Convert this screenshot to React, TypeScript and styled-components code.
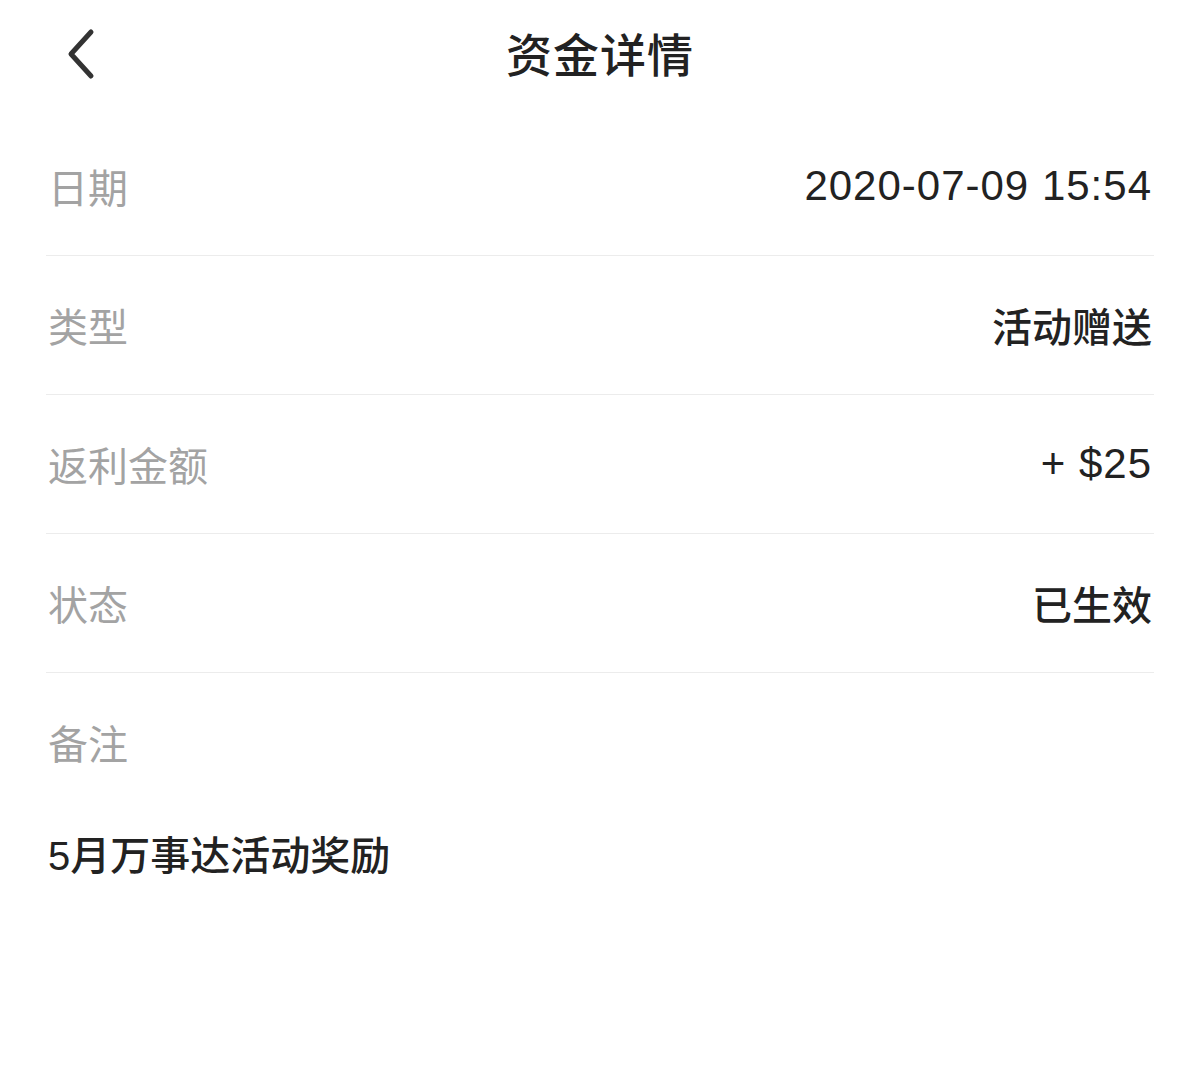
import React from 'react';
import styled, { createGlobalStyle } from 'styled-components';

const GlobalStyle = createGlobalStyle`
  html, body {
    margin: 0;
    padding: 0;
    background: #ffffff;
  }
  body {
    font-family: "Liberation Sans", "Noto Sans CJK SC", sans-serif;
    color: #222222;
  }
`;

const Page = styled.div`
  width: 1200px;
  min-height: 1075px;
  background: #ffffff;
`;

const Header = styled.header`
  position: relative;
  height: 104px;
  display: flex;
  align-items: center;
  justify-content: center;
`;

const BackButton = styled.button`
  position: absolute;
  left: 55px;
  top: 24px;
  width: 48px;
  height: 56px;
  padding: 0;
  border: none;
  background: none;
  display: flex;
  align-items: center;
  justify-content: center;
  cursor: pointer;
`;

const Title = styled.h1`
  margin: 0;
  font-size: 46px;
  font-weight: 500;
  color: #222222;
  letter-spacing: 1px;
`;

const List = styled.div`
  margin: 13px 46px 0;
`;

const Row = styled.div<{ $divider?: boolean }>`
  height: 138px;
  display: flex;
  align-items: center;
  justify-content: space-between;
  padding: 0 2px;
  border-bottom: ${({ $divider }) => ($divider ? '1px solid #ececec' : 'none')};
`;

const Label = styled.span`
  font-size: 40px;
  color: #a3a3a3;
`;

const Value = styled.span<{ $numeric?: boolean }>`
  font-size: ${({ $numeric }) => ($numeric ? '42px' : '40px')};
  font-weight: 500;
  letter-spacing: ${({ $numeric }) => ($numeric ? '1px' : '0')};
  color: #222222;
`;

const Remark = styled.p`
  margin: 13px 0 0;
  padding: 0 2px;
  font-size: 40px;
  font-weight: 500;
  color: #222222;
`;

const rows = [
  { label: '日期', value: '2020-07-09 15:54', numeric: true },
  { label: '类型', value: '活动赠送' },
  { label: '返利金额', value: '+ $25', numeric: true },
  { label: '状态', value: '已生效' },
];

const App: React.FC = () => {
  return (
    <Page>
      <GlobalStyle />
      <Header>
        <BackButton aria-label="返回">
          <svg width="40" height="56" viewBox="0 0 40 56">
            <path
              d="M32 8 L12 30 L32 52"
              fill="none"
              stroke="#333333"
              strokeWidth="5"
              strokeLinecap="round"
              strokeLinejoin="round"
            />
          </svg>
        </BackButton>
        <Title>资金详情</Title>
      </Header>
      <List>
        {rows.map((row) => (
          <Row key={row.label} $divider>
            <Label>{row.label}</Label>
            <Value $numeric={row.numeric}>{row.value}</Value>
          </Row>
        ))}
        <Row>
          <Label>备注</Label>
        </Row>
        <Remark>5月万事达活动奖励</Remark>
      </List>
    </Page>
  );
};

export default App;
